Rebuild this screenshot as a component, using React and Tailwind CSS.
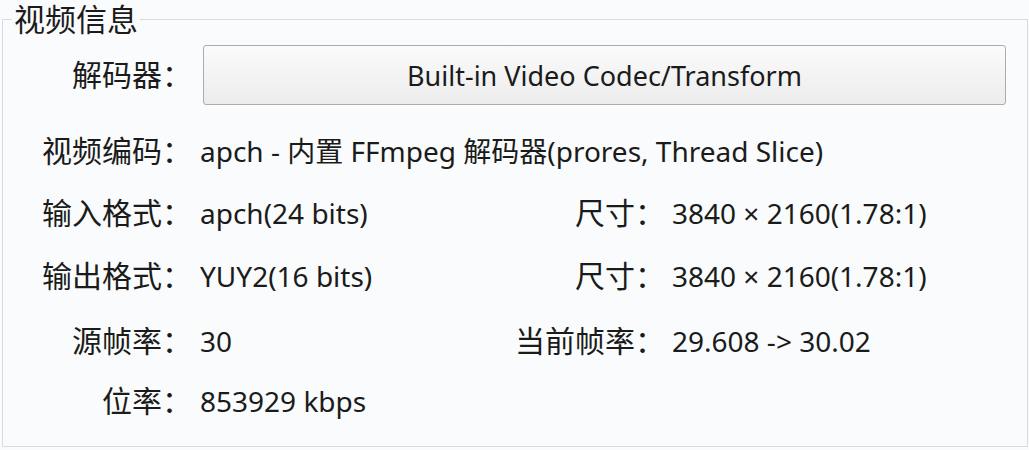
import React from 'react';

const rows = [
  { label: '视频编码：', value: 'apch - 内置 FFmpeg 解码器(prores, Thread Slice)', span: true },
  { label: '输入格式：', value: 'apch(24 bits)', label2: '尺寸：', value2: '3840 × 2160(1.78:1)' },
  { label: '输出格式：', value: 'YUY2(16 bits)', label2: '尺寸：', value2: '3840 × 2160(1.78:1)' },
  { label: '源帧率：', value: '30', label2: '当前帧率：', value2: '29.608 -> 30.02' },
  { label: '位率：', value: '853929 kbps' },
];

const App = () => {
  return (
    <div className="w-[1029px] h-[450px] bg-[#fafbfc] pl-[2px] pr-[1px] pt-[4px] pb-[3px] text-[#1b1b1b] font-['Noto_Sans','Noto_Sans_CJK_SC',sans-serif]">
      <fieldset className="h-full border border-[#d6dbe0] p-0 m-0 min-w-0">
        <legend className="ml-[9px] px-[2px] text-[31px] leading-[30px] h-[30px]">视频信息</legend>

        {/* 解码器 */}
        <div className="flex items-center mt-[11px] mb-[15px] h-[60px]">
          <div className="w-[189px] text-right text-[30px] leading-none">解码器：</div>
          <button className="ml-[11px] w-[803px] h-[60px] rounded-[3px] border border-[#acacac] bg-gradient-to-b from-[#fbfbfb] to-[#ececec] text-[27px] leading-none text-[#1b1b1b]">
            Built-in Video Codec/Transform
          </button>
        </div>

        <div className="grid grid-cols-[189px_311px_162px_1fr] grid-rows-[62px_62px_64px_66px_54px] items-center">
          {rows.map((r, i) => (
            <React.Fragment key={i}>
              <div className="text-right text-[30px] leading-none whitespace-nowrap">{r.label}</div>
              <div className={`pl-[8px] text-[28px] leading-none whitespace-nowrap ${r.span ? 'col-span-3' : ''}`}>{r.value}</div>
              {!r.span && (
                <>
                  <div className="text-right text-[30px] leading-none whitespace-nowrap">{r.label2 || ''}</div>
                  <div className="pl-[7px] text-[28px] leading-none whitespace-nowrap">{r.value2 || ''}</div>
                </>
              )}
            </React.Fragment>
          ))}
        </div>
      </fieldset>
    </div>
  );
};

export default App;
